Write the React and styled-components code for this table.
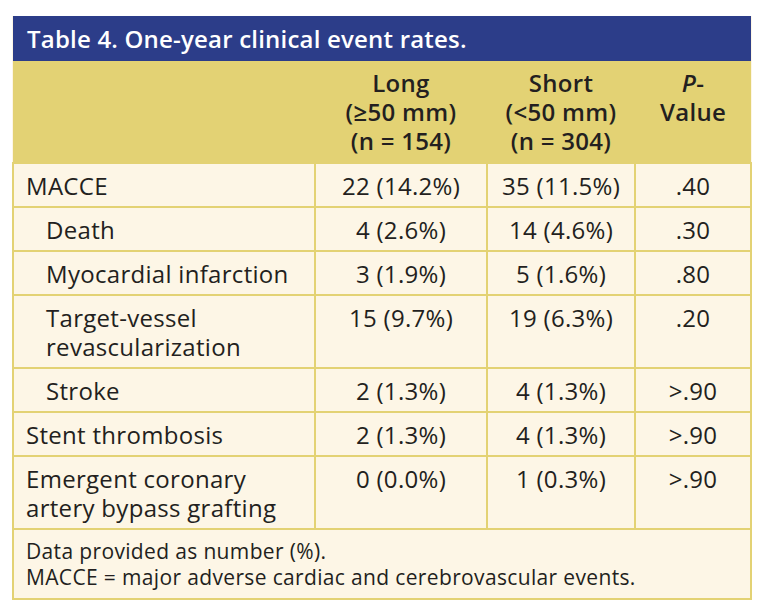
import React from "react";
import styled, {createGlobalStyle} from "styled-components";

const navy = "#2c3d89";
const straw = "#e3d274";
const cream = "#fdf6e6";
const ink = "#231f20";

const GlobalStyle = createGlobalStyle`
  html, body {
    margin: 0;
    padding: 0;
    background: #ffffff;
  }
  body {
    font-family: "Open Sans", "Liberation Sans", sans-serif;
    color: ${ink};
  }
`;

const Page = styled.div`
  padding: 16px 12px 0 12px;
  width: 738px;
`;

const Table = styled.table`
  width: 738px;
  border-collapse: collapse;
  table-layout: fixed;
  background: ${cream};
`;

const TitleCell = styled.th`
  background: ${navy};
  color: #ffffff;
  text-align: left;
  font-size: 24px;
  font-weight: 600;
  line-height: 45px;
  height: 45px;
  padding: 0 14px;
  letter-spacing: 0.2px;
`;

const HeadCell = styled.th`
  background: ${straw};
  font-size: 24px;
  font-weight: 600;
  letter-spacing: 0.3px;
  line-height: 29px;
  padding: 7px 0 7px 0;
  text-align: center;
  vertical-align: top;

  i {
    font-style: italic;
  }
`;

const Cell = styled.td`
  border: 2px solid ${straw};
  font-size: 24px;
  letter-spacing: 0.3px;
  line-height: 29px;
  padding: 7px 0 6px 0;
  vertical-align: top;
  text-align: center;
  white-space: nowrap;
`;

const LabelCell = styled(Cell)`
  text-align: left;
  white-space: normal;
  padding-left: ${p => (p.$indent ? 32 : 12)}px;
  padding-right: 8px;
`;

const NoteCell = styled.td`
  border: 2px solid ${straw};
  font-size: 21px;
  letter-spacing: 0.35px;
  line-height: 26px;
  padding: 8px 12px 8px 12px;
  text-align: left;
`;

const rows = [
    {label: "MACCE", long: "22 (14.2%)", short: "35 (11.5%)", p: ".40"},
    {label: "Death", long: "4 (2.6%)", short: "14 (4.6%)", p: ".30", indent: true},
    {label: "Myocardial infarction", long: "3 (1.9%)", short: "5 (1.6%)", p: ".80", indent: true},
    {label: "Target-vessel revascularization", long: "15 (9.7%)", short: "19 (6.3%)", p: ".20", indent: true},
    {label: "Stroke", long: "2 (1.3%)", short: "4 (1.3%)", p: ">.90", indent: true},
    {label: "Stent thrombosis", long: "2 (1.3%)", short: "4 (1.3%)", p: ">.90"},
    {label: "Emergent coronary artery bypass grafting", long: "0 (0.0%)", short: "1 (0.3%)", p: ">.90"},
];

export default function App() {
    return (
        <Page>
            <GlobalStyle/>
            <Table>
                <colgroup>
                    <col style={{width: 302}}/>
                    <col style={{width: 172}}/>
                    <col style={{width: 148}}/>
                    <col style={{width: 116}}/>
                </colgroup>
                <thead>
                <tr>
                    <TitleCell colSpan={4}>Table 4. One-year clinical event rates.</TitleCell>
                </tr>
                <tr>
                    <HeadCell/>
                    <HeadCell>Long<br/>(≥50 mm)<br/>(n = 154)</HeadCell>
                    <HeadCell>Short<br/>(&lt;50 mm)<br/>(n = 304)</HeadCell>
                    <HeadCell><i>P</i>-<br/>Value</HeadCell>
                </tr>
                </thead>
                <tbody>
                {rows.map(row => (
                    <tr key={row.label}>
                        <LabelCell $indent={row.indent}>{row.label}</LabelCell>
                        <Cell>{row.long}</Cell>
                        <Cell>{row.short}</Cell>
                        <Cell>{row.p}</Cell>
                    </tr>
                ))}
                <tr>
                    <NoteCell colSpan={4}>
                        Data provided as number (%).<br/>
                        MACCE = major adverse cardiac and cerebrovascular events.
                    </NoteCell>
                </tr>
                </tbody>
            </Table>
        </Page>
    );
}
